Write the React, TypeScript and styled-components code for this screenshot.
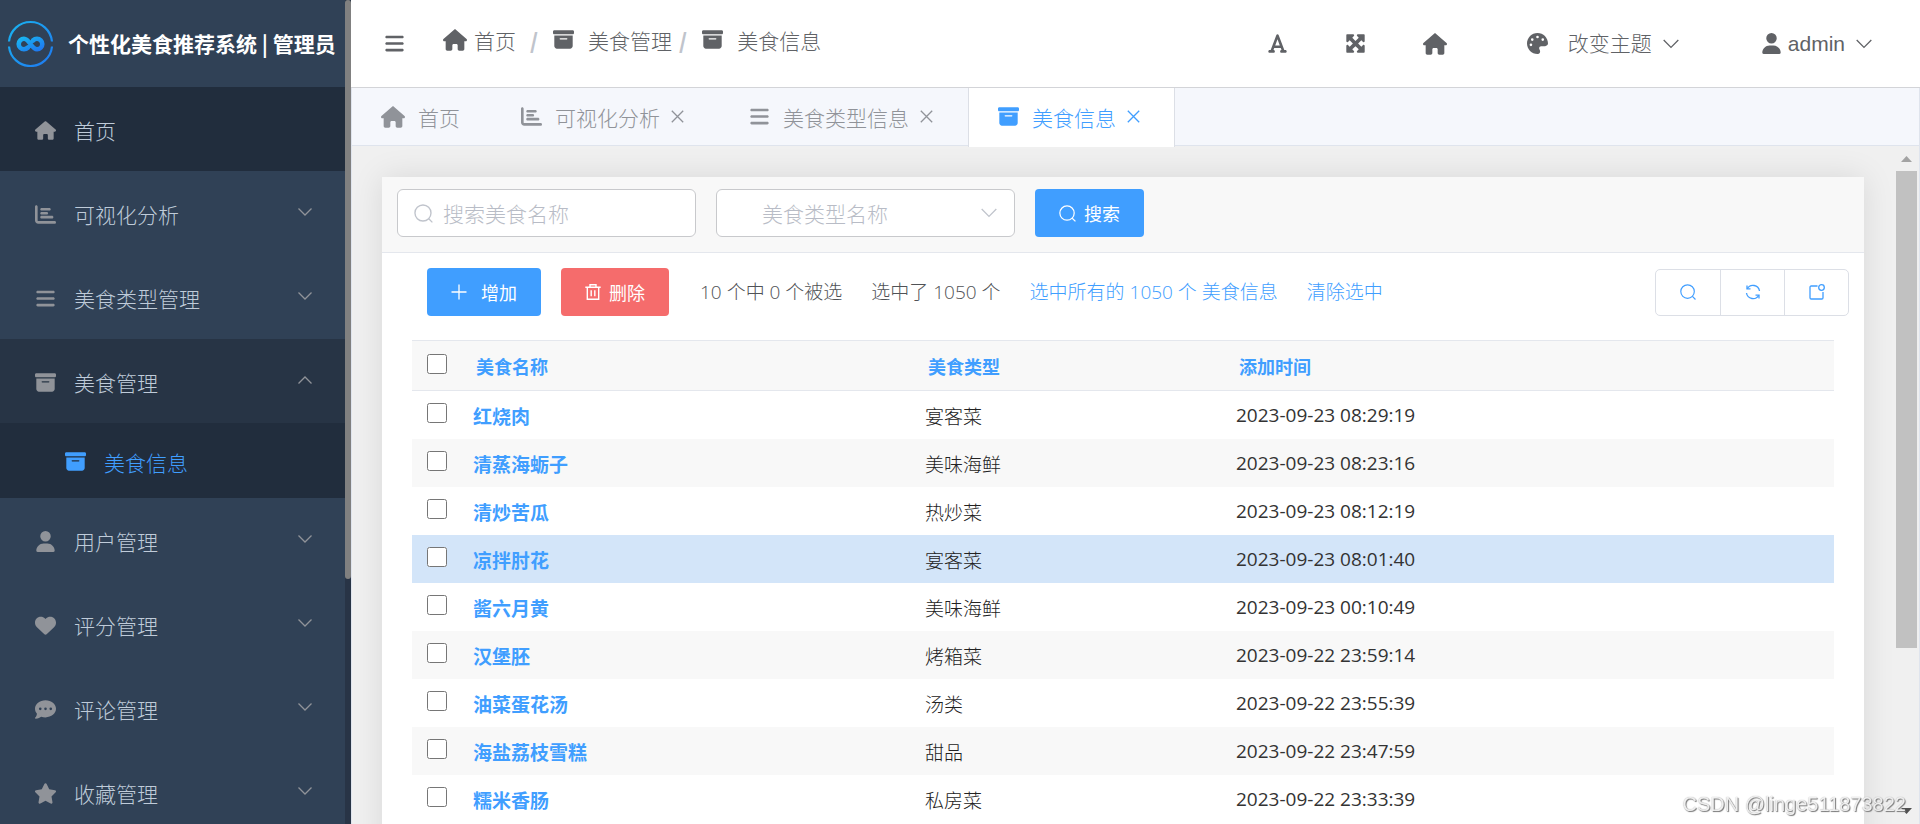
import React from "react";
import styled, { createGlobalStyle, css } from "styled-components";
import {
  FaBars,
  FaBoxArchive,
  FaChartBar,
  FaCommentDots,
  FaFont,
  FaHeart,
  FaHouse,
  FaMaximize,
  FaPalette,
  FaStar,
  FaUser,
} from "react-icons/fa6";

const blue = "#409eff";

const GlobalStyle = createGlobalStyle`
  *, *::before, *::after { box-sizing: border-box; }
  body {
    margin: 0;
    overflow: hidden;
    color: #333;
    background: #f0f0f0;
    font-family: "Noto Sans CJK SC", "Noto Sans", sans-serif;
    font-size: 21px;
    font-weight: 300;
  }
  button, input, select { font: inherit; }
  a { color: inherit; text-decoration: none; }
`;

const Page = styled.div`
  display: flex;
  height: 100vh;
  overflow: hidden;
`;

/* Line icons */

const Line = styled.svg<{ $size: number; $stroke?: number }>`
  flex: none;
  width: ${(p) => p.$size}px;
  height: ${(p) => p.$size}px;
  fill: none;
  stroke: currentColor;
  stroke-width: ${(p) => p.$stroke ?? 1.3};
`;

const Chevron = ({ size, up = false }: { size: number; up?: boolean }) => (
  <Line $size={size} viewBox="0 0 16 16" aria-hidden="true">
    <path d={up ? "M1.5 11.5 8 5l6.5 6.5" : "M1.5 4.5 8 11l6.5-6.5"} vectorEffect="non-scaling-stroke" />
  </Line>
);
const Cross = () => (
  <Line $size={13} viewBox="0 0 13 13" aria-hidden="true">
    <path d="M.8.8 12.2 12.2M12.2.8.8 12.2" />
  </Line>
);
const SearchIcon = ({ size }: { size: number }) => (
  <Line $size={size} viewBox="0 0 18 18" aria-hidden="true">
    <circle cx="8.5" cy="8.5" r="7.6" />
    <path d="m14 14 3.4 3.4" />
  </Line>
);
const PlusIcon = () => (
  <Line $size={16} viewBox="0 0 16 16" aria-hidden="true">
    <path d="M8 .5v15M.5 8h15" />
  </Line>
);
const TrashIcon = () => (
  <Line $size={16} $stroke={1.4} viewBox="0 0 16 16" aria-hidden="true">
    <path d="M.3 3.3h15.4M5 3V.8h6V3M2.3 3.5v11.7h11.4V3.5M6.2 6.3v6M9.8 6.3v6" />
  </Line>
);
const RefreshIcon = () => (
  <Line $size={16} viewBox="0 0 16 16" aria-hidden="true">
    <path d="M2.2 4.8A6.6 6.6 0 0 1 14.5 7M13.8 11.2A6.6 6.6 0 0 1 1.5 9" />
    <path d="M2 1.5v3.3h3.5M14 14.5v-3.3h-3.5" />
  </Line>
);
const ExportIcon = () => (
  <Line $size={16} viewBox="0 0 16 16" aria-hidden="true">
    <path d="M8.5 2H2.2C1.5 2 1 2.5 1 3.2v10.6c0 .7.5 1.2 1.2 1.2h10.6c.7 0 1.2-.5 1.2-1.2V8" />
    <circle cx="12.5" cy="3.5" r="2.8" />
  </Line>
);

/* Sidebar */

const Sidebar = styled.aside`
  flex: none;
  display: flex;
  width: 351px;
  background: #304156;
`;
const SideBody = styled.div`
  flex: 1;
  overflow: hidden;
`;
const SideTrack = styled.div`
  width: 6px;
  background: #283446;
`;
const SideThumb = styled.div`
  height: 70.3%;
  border-radius: 3px;
  background: #808080;
`;
const Brand = styled.div`
  display: flex;
  align-items: center;
  gap: 14px;
  height: 87px;
  padding-left: 7px;
  color: #fff;
  font-weight: 700;
  white-space: nowrap;
`;
const BrandName = styled.span`
  padding-bottom: 2px;
`;
const Logo = styled.svg`
  flex: none;
  width: 47px;
  height: 47px;
`;
const Menu = styled.ul`
  margin: 0;
  padding: 0;
  list-style: none;
`;
const MenuButton = styled.button<{ $tone?: "home" | "open" | "sub" }>`
  display: flex;
  align-items: center;
  width: 100%;
  height: 84px;
  padding: 2px 32px 0;
  border: 0;
  background: none;
  color: #bfcbd9;
  text-align: left;
  ${(p) => p.$tone === "home" && css`background: #212d3d;`}
  ${(p) => p.$tone === "open" && css`background: #273445;`}
  ${(p) => p.$tone === "sub" && css`
    height: 75px;
    padding-left: 62px;
    background: #212d3d;
    color: ${blue};
  `}
`;
const MenuIcon = styled.span<{ $active?: boolean }>`
  display: flex;
  justify-content: center;
  width: 26px;
  margin-right: 16px;
  color: ${(p) => (p.$active ? blue : "#909399")};
`;
const MenuText = styled.span`
  flex: 1;
`;
const MenuArrow = styled.span`
  display: flex;
  padding-bottom: 4px;
  color: #909399;
`;

/* Header */

const Main = styled.div`
  flex: 1;
  min-width: 0;
  display: flex;
  flex-direction: column;
`;
const Header = styled.header`
  flex: none;
  display: flex;
  align-items: center;
  height: 88px;
  padding: 0 47px 0 33px;
  border-bottom: 1px solid #d3d4d8;
  background: #fff;
  color: #606266;
  white-space: nowrap;
`;
const PlainButton = styled.button`
  display: flex;
  align-items: center;
  gap: 10px;
  padding: 0;
  border: 0;
  background: none;
  color: inherit;
`;
const Crumbs = styled.nav`
  display: flex;
  align-items: center;
  margin-left: 38px;
  padding-bottom: 8px;
`;
const Crumb = styled.a<{ $gap: number }>`
  display: flex;
  align-items: center;
  gap: ${(p) => p.$gap}px;
`;
const Slash = styled.span<{ $wide?: boolean }>`
  padding: 0 15px 0 ${(p) => (p.$wide ? 14 : 7)}px;
  color: #c0c4cc;
  font-weight: 900;
  line-height: 24px;
`;
const Tools = styled.div`
  display: flex;
  align-items: center;
  gap: 57px;
  margin-left: auto;
`;
const ToolMenus = styled.div`
  display: flex;
  gap: 81px;
  margin-left: 23px;
`;
const ThemeLabel = styled.span`
  margin-left: 10px;
  padding-bottom: 3px;
`;
const UserName = styled.span`
  margin-left: -4px;
  font-family: "Liberation Sans", sans-serif;
`;

/* Tabs */

const Tabs = styled.nav`
  flex: none;
  display: flex;
  height: 58px;
  border: solid #dfe4ed;
  border-width: 0 1px 1px;
  background: #f5f7fc;
`;
const Tab = styled.div<{ $active?: boolean }>`
  display: flex;
  align-items: center;
  gap: 13px;
  height: 57px;
  padding: 0 30px 0 28px;
  border: solid transparent;
  border-width: 0 1px;
  color: #909399;
  white-space: nowrap;
  & + & { padding-left: 29px; }
  ${(p) => p.$active && css`
    height: 59px;
    padding-bottom: 2px;
    border-color: #dcdfe6;
    background: #fff;
    color: ${blue};
  `}
`;
const TabClose = styled(PlainButton)`
  margin: 0 4px 0 -2px;
`;

/* Content */

const Content = styled.div`
  flex: 1;
  min-height: 0;
  display: flex;
  border: solid #dfe4ed;
  border-width: 0 1px;
`;
const Scroller = styled.main`
  flex: 1;
  min-width: 0;
  overflow: hidden;
  padding: 31px 32px 0 30px;
`;
const ScrollBar = styled.div`
  display: flex;
  flex-direction: column;
  align-items: center;
  width: 23px;
  padding: 10px 2px 10px 0;
`;
const ScrollThumb = styled.div`
  width: 21px;
  height: 72.5%;
  margin: 9px 0 auto;
  background: #c1c1c1;
`;
const Arrow = styled.svg<{ $dark?: boolean }>`
  flex: none;
  width: 11px;
  height: 6px;
  fill: ${(p) => (p.$dark ? "#505050" : "#a3a3a3")};
`;
const Card = styled.section`
  background: #fff;
  box-shadow: 0 0 30px rgba(0, 0, 0, 0.1);
`;
const FilterBar = styled.form`
  display: flex;
  align-items: center;
  gap: 20px;
  height: 76px;
  padding: 0 15px 3px;
  border-bottom: 1px solid #e4e7ed;
  background: #f8f8f8;
`;
const Field = styled.label`
  display: flex;
  align-items: center;
  gap: 10px;
  width: 299px;
  height: 48px;
  padding: 0 16px;
  border: 1px solid #c8c9cc;
  border-radius: 6px;
  background: #fff;
  color: #c0c4cc;
`;
const TextInput = styled.input`
  flex: 1;
  min-width: 0;
  padding: 0;
  border: 0;
  outline: 0;
  background: none;
  color: #606266;
  &::placeholder { color: #b8bcc6; opacity: 1; }
`;
const Select = styled.select`
  flex: 1;
  min-width: 0;
  padding: 0 0 0 29px;
  border: 0;
  outline: 0;
  background: none;
  color: #b8bcc6;
  appearance: none;
`;
const Button = styled.button<{ $color?: string; $gap?: number }>`
  display: flex;
  align-items: center;
  justify-content: center;
  gap: ${(p) => p.$gap ?? 8}px;
  height: 48px;
  padding: 0 24px;
  border: 0;
  border-radius: 4px;
  background: ${(p) => p.$color ?? blue};
  color: #fff;
  font-size: 18px;
  font-weight: 400;
  white-space: nowrap;
`;
const Toolbar = styled.div`
  display: flex;
  align-items: center;
  height: 87px;
  padding: 0 15px 9px 45px;
  color: #505256;
  font-family: "Open Sans", "Noto Sans CJK SC", sans-serif;
  font-size: 19px;
  white-space: nowrap;
`;
const ButtonRow = styled.div`
  display: flex;
  gap: 20px;
`;
const Selection = styled.div`
  display: flex;
  gap: 29px;
  margin-left: 31px;
  padding-bottom: 2px;
`;
const BlueLink = styled.a`
  color: ${blue};
`;
const IconGroup = styled.div`
  display: flex;
  height: 47px;
  margin-left: auto;
  border: 1px solid #dcdfe6;
  border-radius: 5px;
`;
const IconButton = styled.button`
  display: flex;
  align-items: center;
  justify-content: center;
  width: 64px;
  padding: 0;
  border: 0;
  background: none;
  color: ${blue};
  & + & { border-left: 1px solid #dcdfe6; }
`;
const TableWrap = styled.div`
  padding: 0 30px 30px;
`;
const Table = styled.table`
  width: 100%;
  border-collapse: collapse;
  table-layout: fixed;
  font-size: 19px;
  text-align: left;
`;
const HeadRow = styled.tr`
  height: 50px;
  border: solid #e4e7ed;
  border-width: 1px 0;
  background: #f8f8f8;
`;
const Row = styled.tr<{ $hover: boolean }>`
  height: 48px;
  &:nth-child(even) { background: #f8f8f8; }
  ${(p) => p.$hover && css`&&& { background: #d3e5f9; }`}
`;
const HeadCell = styled.th<{ $width?: string }>`
  width: ${(p) => p.$width ?? "auto"};
  padding: 0 0 0 3px;
  color: ${blue};
  font-size: 18px;
  font-weight: 700;
`;
const Cell = styled.td`
  padding: 1px 0 0;
  color: #222;
`;
const TimeCell = styled(Cell)`
  color: #333;
  font-family: "Open Sans", "Noto Sans CJK SC", sans-serif;
  font-weight: 400;
`;
const CheckHead = styled.th`
  width: 61px;
  padding: 0 0 4px 15px;
`;
const CheckCell = styled.td`
  padding: 0 0 4px 15px;
`;
const Check = styled.input`
  display: block;
  width: 20px;
  height: 20px;
  margin: 0;
`;
const NameLink = styled.a`
  color: ${blue};
  font-weight: 700;
`;
const Watermark = styled.div`
  position: fixed;
  right: 14px;
  bottom: 7px;
  color: rgba(255, 255, 255, 0.85);
  font-family: "Liberation Sans", sans-serif;
  font-size: 20px;
  font-weight: 400;
  line-height: 26px;
  text-shadow: 1px 1px 1px #777, 0 0 1px #999;
  pointer-events: none;
`;

const menuItems = [
  { text: "首页", icon: <FaHouse size={21} />, tone: "home" as const },
  { text: "可视化分析", icon: <FaChartBar size={21} />, arrow: true },
  { text: "美食类型管理", icon: <FaBars size={21} />, arrow: true },
  { text: "美食管理", icon: <FaBoxArchive size={21} />, arrow: true, tone: "open" as const },
  { text: "美食信息", icon: <FaBoxArchive size={21} />, tone: "sub" as const },
  { text: "用户管理", icon: <FaUser size={21} />, arrow: true },
  { text: "评分管理", icon: <FaHeart size={21} />, arrow: true },
  { text: "评论管理", icon: <FaCommentDots size={21} />, arrow: true },
  { text: "收藏管理", icon: <FaStar size={23} />, arrow: true },
];

const tabs = [
  { text: "首页", icon: <FaHouse size={24} />, closable: false },
  { text: "可视化分析", icon: <FaChartBar size={21} />, closable: true },
  { text: "美食类型信息", icon: <FaBars size={21} />, closable: true },
  { text: "美食信息", icon: <FaBoxArchive size={21} />, closable: true, active: true },
];

const foods = [
  ["红烧肉", "宴客菜", "2023-09-23 08:29:19"],
  ["清蒸海蛎子", "美味海鲜", "2023-09-23 08:23:16"],
  ["清炒苦瓜", "热炒菜", "2023-09-23 08:12:19"],
  ["凉拌肘花", "宴客菜", "2023-09-23 08:01:40"],
  ["酱六月黄", "美味海鲜", "2023-09-23 00:10:49"],
  ["汉堡胚", "烤箱菜", "2023-09-22 23:59:14"],
  ["油菜蛋花汤", "汤类", "2023-09-22 23:55:39"],
  ["海盐荔枝雪糕", "甜品", "2023-09-22 23:47:59"],
  ["糯米香肠", "私房菜", "2023-09-22 23:33:39"],
];

export default function App() {
  return (
    <Page>
      <GlobalStyle />
      <Sidebar>
        <SideBody>
          <Brand>
            <Logo viewBox="0 0 47 47" fill="none" aria-hidden="true">
              <defs>
                <linearGradient id="brand" x1="0" y1="0" x2="1" y2="1">
                  <stop offset="0" stopColor="#19b5f1" />
                  <stop offset="1" stopColor="#1f78f0" />
                </linearGradient>
              </defs>
              <path
                d="M2 21.5a21.6 21.6 0 0 1 43 0M2 26.5a21.6 21.6 0 0 0 43 0"
                stroke="url(#brand)"
                strokeWidth="2.2"
              />
              <path
                d="M26 20.5C27.5 19 28.8 18.7 30 18.7a5.3 5.3 0 0 1 0 10.6C24.5 29.3 22.500 18.700 17 18.700a5.300 5.300 0 0 0 0 10.600C18.200 29.300 19.500 29 21 27.500"
                stroke="url(#brand)"
                strokeWidth="4.6"
                strokeLinecap="round"
              />
            </Logo>
            <BrandName>个性化美食推荐系统 | 管理员</BrandName>
          </Brand>
          <Menu>
            {menuItems.map((m) => (
              <li key={m.text}>
                <MenuButton type="button" $tone={m.tone}>
                  <MenuIcon $active={m.tone === "sub"}>{m.icon}</MenuIcon>
                  <MenuText>{m.text}</MenuText>
                  {m.arrow && (
                    <MenuArrow>
                      <Chevron size={16} up={m.tone === "open"} />
                    </MenuArrow>
                  )}
                </MenuButton>
              </li>
            ))}
          </Menu>
        </SideBody>
        <SideTrack>
          <SideThumb />
        </SideTrack>
      </Sidebar>

      <Main>
        <Header>
          <PlainButton type="button" aria-label="折叠菜单">
            <FaBars size={21} />
          </PlainButton>
          <Crumbs>
            <Crumb href="#" $gap={7}>
              <FaHouse size={24} />
              首页
            </Crumb>
            <Slash $wide>/</Slash>
            <Crumb href="#" $gap={14}>
              <FaBoxArchive size={21} />
              美食管理
            </Crumb>
            <Slash>/</Slash>
            <Crumb href="#" $gap={14}>
              <FaBoxArchive size={21} />
              美食信息
            </Crumb>
          </Crumbs>
          <Tools>
            <PlainButton type="button" aria-label="字体">
              <FaFont size={21} />
            </PlainButton>
            <PlainButton type="button" aria-label="全屏">
              <FaMaximize size={21} />
            </PlainButton>
            <PlainButton type="button" aria-label="主页">
              <FaHouse size={24} />
            </PlainButton>
            <ToolMenus>
              <PlainButton type="button">
                <FaPalette size={21} />
                <ThemeLabel>改变主题</ThemeLabel>
                <Chevron size={18} />
              </PlainButton>
              <PlainButton type="button">
                <FaUser size={21} />
                <UserName>admin</UserName>
                <Chevron size={18} />
              </PlainButton>
            </ToolMenus>
          </Tools>
        </Header>

        <Tabs>
          {tabs.map((t) => (
            <Tab key={t.text} $active={t.active}>
              {t.icon}
              {t.text}
              {t.closable && (
                <TabClose type="button" aria-label="关闭">
                  <Cross />
                </TabClose>
              )}
            </Tab>
          ))}
        </Tabs>

        <Content>
          <Scroller>
            <Card>
              <FilterBar onSubmit={(e) => e.preventDefault()}>
                <Field>
                  <SearchIcon size={19} />
                  <TextInput placeholder="搜索美食名称" aria-label="搜索美食名称" />
                </Field>
                <Field>
                  <Select aria-label="美食类型名称" defaultValue="">
                    <option value="">美食类型名称</option>
                  </Select>
                  <Chevron size={18} />
                </Field>
                <Button type="submit">
                  <SearchIcon size={17} />
                  搜索
                </Button>
              </FilterBar>
              <Toolbar>
                <ButtonRow>
                  <Button type="button" $gap={14}>
                    <PlusIcon />
                    增加
                  </Button>
                  <Button type="button" $color="#f56c6c">
                    <TrashIcon />
                    删除
                  </Button>
                </ButtonRow>
                <Selection>
                  <span>10 个中 0 个被选</span>
                  <span>选中了 1050 个</span>
                  <BlueLink href="#">选中所有的 1050 个 美食信息</BlueLink>
                  <BlueLink href="#">清除选中</BlueLink>
                </Selection>
                <IconGroup>
                  <IconButton type="button" aria-label="搜索">
                    <SearchIcon size={16} />
                  </IconButton>
                  <IconButton type="button" aria-label="刷新">
                    <RefreshIcon />
                  </IconButton>
                  <IconButton type="button" aria-label="导出">
                    <ExportIcon />
                  </IconButton>
                </IconGroup>
              </Toolbar>
              <TableWrap>
                <Table>
                  <thead>
                    <HeadRow>
                      <CheckHead>
                        <Check type="checkbox" aria-label="全选" />
                      </CheckHead>
                      <HeadCell $width="452px">美食名称</HeadCell>
                      <HeadCell $width="311px">美食类型</HeadCell>
                      <HeadCell>添加时间</HeadCell>
                    </HeadRow>
                  </thead>
                  <tbody>
                    {foods.map(([name, kind, time], i) => (
                      <Row key={name} $hover={i === 3}>
                        <CheckCell>
                          <Check type="checkbox" aria-label={name} />
                        </CheckCell>
                        <Cell>
                          <NameLink href="#">{name}</NameLink>
                        </Cell>
                        <Cell>{kind}</Cell>
                        <TimeCell>{time}</TimeCell>
                      </Row>
                    ))}
                  </tbody>
                </Table>
              </TableWrap>
            </Card>
          </Scroller>
          <ScrollBar>
            <Arrow viewBox="0 0 11 6">
              <path d="M0 6 5.5 0 11 6z" />
            </Arrow>
            <ScrollThumb />
            <Arrow $dark viewBox="0 0 11 6">
              <path d="M0 0h11L5.5 6z" />
            </Arrow>
          </ScrollBar>
        </Content>
      </Main>
      <Watermark>CSDN @linge511873822</Watermark>
    </Page>
  );
}
